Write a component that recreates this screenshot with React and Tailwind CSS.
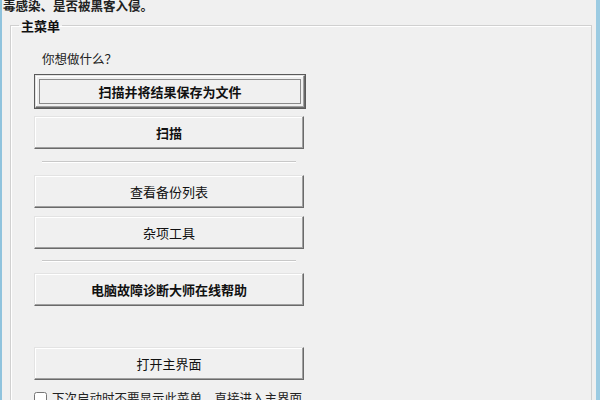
import React, { useState } from 'react'

const font = { fontFamily: '"Noto Sans CJK SC", "Liberation Sans", sans-serif' }

const Button = ({ label, bold, isDefault }) => (
  <button
    className={
      'w-[270px] h-[33px] bg-[#f0f0f0] text-[13px] text-[#111] flex items-center justify-center ' +
      'border border-t-[#e3e3e3] border-l-[#e3e3e3] border-r-[#6a6a6a] border-b-[#6a6a6a] ' +
      'shadow-[inset_-1px_-1px_0_#a0a0a0,inset_1px_1px_0_#ffffff] ' +
      (bold ? 'font-bold ' : '') +
      (isDefault ? 'outline outline-1 outline-[#5a5a5a]' : '')
    }
  >
    {isDefault ? (
      <span className="w-[262px] h-[25px] border border-[#8a8a8a] flex items-center justify-center">
        {label}
      </span>
    ) : (
      label
    )}
  </button>
)

const Separator = () => <div className="w-[254px] ml-2 h-[2px] border-t border-t-[#c8c8c8] border-b border-b-white" />

const App = () => {
  const [skip, setSkip] = useState(false)

  return (
    <div
      className="w-[600px] h-[400px] overflow-hidden bg-[#f0f0f0] border-l-2 border-l-[#8fc3dd] border-r-4 border-r-[#9ccbe2] relative"
      style={font}
    >
      <p className="text-[12.5px] font-bold text-[#222] leading-none mt-0 ml-px">毒感染、是否被黑客入侵。</p>

      <fieldset className="ml-2 mt-[6px] mr-[4px] h-[420px] border border-[#d0d0d0] shadow-[inset_1px_1px_0_#fff] px-[23px]">
        <legend className="-ml-[15px] px-[2px] text-[13px] font-bold text-[#111] leading-none">主菜单</legend>

        <p className="mt-[21px] ml-2 text-[12.5px] text-[#222] leading-none">你想做什么？</p>

        <div className="mt-[10px] flex flex-col gap-[8px]">
          <div className="pl-px">
            <Button label="扫描并将结果保存为文件" bold isDefault />
          </div>
          <Button label="扫描" bold />
        </div>

        <div className="my-[12px]">
          <Separator />
        </div>

        <div className="flex flex-col gap-[8px]">
          <Button label="查看备份列表" />
          <Button label="杂项工具" />
        </div>

        <div className="my-[11px]">
          <Separator />
        </div>

        <Button label="电脑故障诊断大师在线帮助" bold />

        <div className="mt-[41px]">
          <Button label="打开主界面" />
        </div>

        <label className="mt-[12px] flex items-center gap-[5px] text-[12.5px] text-[#222] leading-none">
          <input
            type="checkbox"
            checked={skip}
            onChange={() => setSkip(v => !v)}
            className="w-[13px] h-[13px] m-0 accent-[#333]"
          />
          下次启动时不要显示此菜单，直接进入主界面
        </label>
      </fieldset>
    </div>
  )
}

export default App
